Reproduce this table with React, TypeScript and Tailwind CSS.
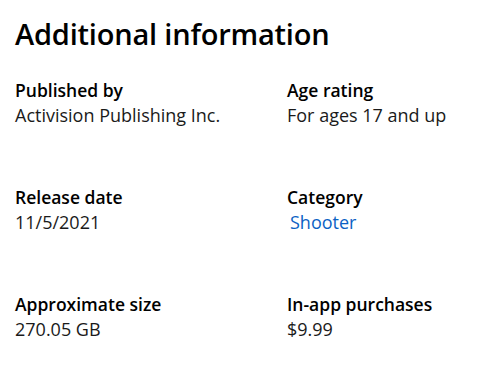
const items = [
  { label: "Published by", value: "Activision Publishing Inc." },
  { label: "Age rating", value: "For ages 17 and up" },
  { label: "Release date", value: "11/5/2021" },
  { label: "Category", value: "Shooter", link: true },
  { label: "Approximate size", value: "270.05 GB" },
  { label: "In-app purchases", value: "$9.99" },
];

export default function App() {
  return (
    <div className="min-h-screen bg-white pl-[15px] pt-[12px] text-[#1a1a1a] font-['Open_Sans',sans-serif]">
      <h1 className="text-[29px] leading-[44px] font-semibold tracking-[-0.2px] text-black">Additional information</h1>
      <div className="mt-[22px] grid grid-cols-[272px_1fr] gap-y-[57px]">
        {items.map((item) => (
          <div key={item.label} className="flex flex-col">
            <span className="text-[17.5px] leading-[25px] font-semibold text-black">{item.label}</span>
            {item.link ? (
              <a href="#" className="text-[18px] leading-[25px] text-[#0b62c4] pl-[3px]">
                {item.value}
              </a>
            ) : (
              <span className="text-[18px] leading-[25px] text-[#1a1a1a]">{item.value}</span>
            )}
          </div>
        ))}
      </div>
    </div>
  );
}
